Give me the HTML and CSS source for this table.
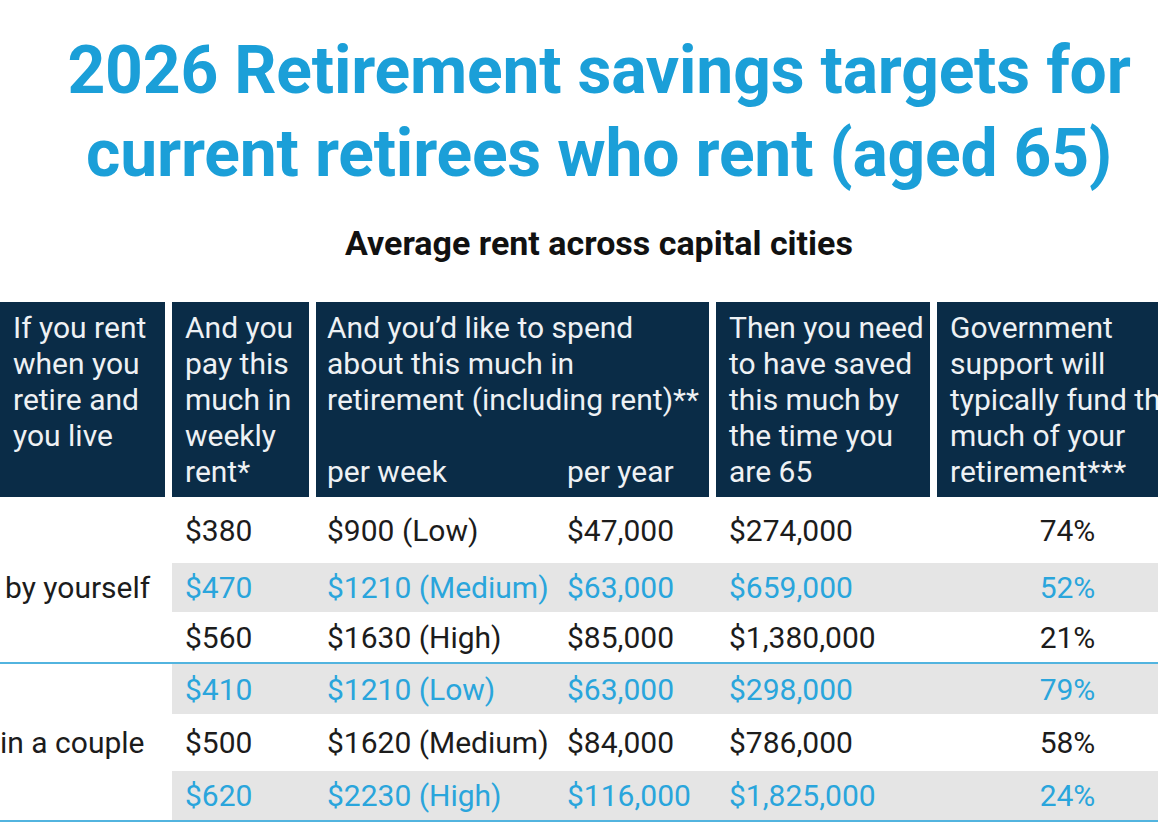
FILE: index.html
```html
<!DOCTYPE html>
<html lang="en">
<head>
<meta charset="utf-8">
<title>2026 Retirement savings targets</title>
<link rel="stylesheet" href="styles.css">
</head>
<body>
<div class="page">
  <h1 class="title">2026 Retirement savings targets for<br>current retirees who rent (aged 65)</h1>
  <h2 class="subtitle">Average rent across capital cities</h2>

  <div class="head">
    <div class="hcell">If you rent when you retire and you live</div>
    <div class="hcell">And you pay this much in weekly rent*</div>
    <div class="hcell hcell-split">
      <div class="hspan">And you’d like to spend about this much in retirement (including rent)**</div>
      <div class="hsub">per week</div>
      <div class="hsub">per year</div>
    </div>
    <div class="hcell">Then you need to have saved this much by the time you are 65</div>
    <div class="hcell hcell-last">Government support will typically fund this much of your retirement***</div>
  </div>

  <div class="row r1">
    <div class="label"></div>
    <div class="c">$380</div>
    <div class="c split"><span>$900 (Low)</span><span>$47,000</span></div>
    <div class="c">$274,000</div>
    <div class="c pct">74%</div>
  </div>
  <div class="row r2 alt">
    <div class="label label-single">by yourself</div>
    <div class="c">$470</div>
    <div class="c split"><span>$1210 (Medium)</span><span>$63,000</span></div>
    <div class="c">$659,000</div>
    <div class="c pct">52%</div>
  </div>
  <div class="row r3">
    <div class="label"></div>
    <div class="c">$560</div>
    <div class="c split"><span>$1630 (High)</span><span>$85,000</span></div>
    <div class="c">$1,380,000</div>
    <div class="c pct">21%</div>
  </div>
  <div class="rule"></div>
  <div class="row r4 alt">
    <div class="label"></div>
    <div class="c">$410</div>
    <div class="c split"><span>$1210 (Low)</span><span>$63,000</span></div>
    <div class="c">$298,000</div>
    <div class="c pct">79%</div>
  </div>
  <div class="row r5">
    <div class="label label-couple">in a couple</div>
    <div class="c">$500</div>
    <div class="c split"><span>$1620 (Medium)</span><span>$84,000</span></div>
    <div class="c">$786,000</div>
    <div class="c pct">58%</div>
  </div>
  <div class="row r6 alt">
    <div class="label"></div>
    <div class="c">$620</div>
    <div class="c split"><span>$2230 (High)</span><span>$116,000</span></div>
    <div class="c">$1,825,000</div>
    <div class="c pct">24%</div>
  </div>
  <div class="rule"></div>
</div>
</body>
</html>
```

FILE: styles.css
```css
html, body {
  margin: 0;
  padding: 0;
  background: #ffffff;
  overflow: hidden;
}

body {
  font-family: Roboto, "Liberation Sans", Arial, sans-serif;
  color: #1c1c1c;
}

.page {
  width: 1198px;
}

.title {
  margin: 29px 0 0;
  font-size: 66px;
  line-height: 83px;
  font-weight: 700;
  color: #1b9fd8;
  text-align: center;
  letter-spacing: -0.2px;
}

.subtitle {
  margin: 28px 0 0;
  font-size: 34px;
  line-height: 40px;
  font-weight: 700;
  color: #111111;
  text-align: center;
}

.head {
  margin-top: 39px;
  display: grid;
  grid-template-columns: 165px 137px 393px 214px 261px;
  column-gap: 7px;
  height: 195px;
}

.hcell {
  background: #0a2c47;
  color: #eef1f4;
  font-size: 30px;
  line-height: 36px;
  padding: 8px 4px 0 13px;
}

.hcell-split {
  padding-left: 11px;
  display: grid;
  grid-template-columns: 240px 1fr;
  grid-template-rows: auto 1fr;
}

.hspan {
  grid-column: 1 / -1;
}

.hsub {
  align-self: end;
  padding-bottom: 7px;
}

.hcell-last {
  padding-right: 0;
}

.row {
  display: grid;
  grid-template-columns: 165px 137px 393px 214px 261px;
  column-gap: 7px;
  align-items: center;
  font-size: 30px;
  color: #1c1c1c;
}

.row.alt {
  background: linear-gradient(to right, transparent 172px, #e5e5e5 172px);
  color: #2aa5dc;
}

.label {
  color: #1c1c1c;
  white-space: nowrap;
}

.label-single {
  padding-left: 5px;
}

.label-couple {
  padding-left: 0;
}

.r1 { height: 66px; }
.r2 { height: 49px; }
.r3 { height: 50px; }
.r4 { height: 50px; }
.r5 { height: 57px; }
.r6 { height: 49px; }

.c {
  padding-left: 13px;
  white-space: nowrap;
}

.split {
  padding-left: 11px;
  display: grid;
  grid-template-columns: 240px 1fr;
}

.pct {
  padding-left: 0;
  text-align: center;
}

.rule {
  height: 2px;
  background: #52b4df;
}
```
